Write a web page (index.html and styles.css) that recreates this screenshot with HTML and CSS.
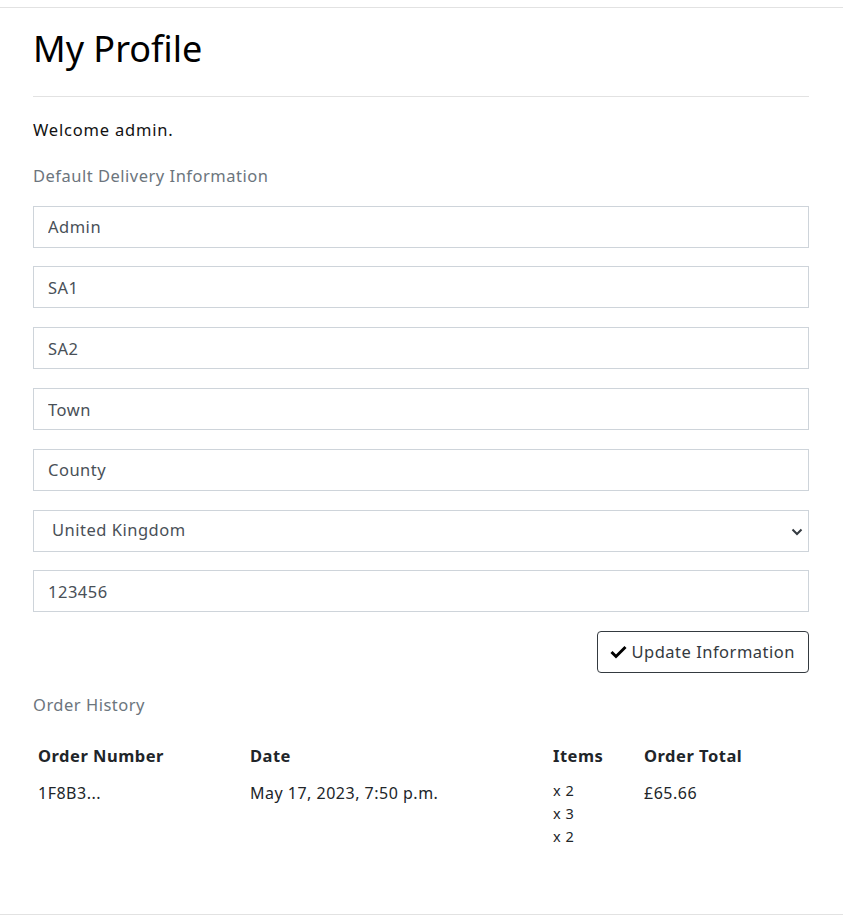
FILE: index.html
```
<!DOCTYPE html>
<html lang="en">
<head>
<meta charset="utf-8">
<title>My Profile</title>
<link rel="stylesheet" href="styles.css">
</head>
<body>
<div class="topbar"></div>
<main class="page">
  <h1 class="title">My Profile</h1>
  <hr class="rule">
  <p class="welcome">Welcome admin.</p>
  <p class="section-label">Default Delivery Information</p>
  <form class="form">
    <input class="field" type="text" value="Admin">
    <input class="field" type="text" value="SA1">
    <input class="field" type="text" value="SA2">
    <input class="field" type="text" value="Town">
    <input class="field" type="text" value="County">
    <div class="select-wrap">
      <select class="field select">
        <option>United Kingdom</option>
      </select>
      <svg class="chev" width="12" height="8" viewBox="0 0 12 8"><path d="M1.5 1.5 L6 6 L10.5 1.5" fill="none" stroke="#343a40" stroke-width="2"/></svg>
    </div>
    <input class="field" type="text" value="123456">
    <div class="actions">
      <button type="button" class="btn">
        <svg class="check" width="17" height="14" viewBox="0 0 17 14"><path d="M1.5 7 L6 11.5 L15.5 2" fill="none" stroke="#000" stroke-width="3"/></svg>
        Update Information
      </button>
    </div>
  </form>
  <p class="section-label orders-label">Order History</p>
  <table class="orders">
    <thead>
      <tr>
        <th class="c-num">Order Number</th>
        <th class="c-date">Date</th>
        <th class="c-items">Items</th>
        <th class="c-total">Order Total</th>
      </tr>
    </thead>
    <tbody>
      <tr>
        <td>1F8B3...</td>
        <td>May 17, 2023, 7:50 p.m.</td>
        <td>
          <ul class="items">
            <li>x 2</li>
            <li>x 3</li>
            <li>x 2</li>
          </ul>
        </td>
        <td>£65.66</td>
      </tr>
    </tbody>
  </table>
</main>
<div class="bottombar"></div>
</body>
</html>
```
FILE: styles.css
```
* { box-sizing: border-box; }
html, body { margin: 0; padding: 0; background: #fff; }
body {
  font-family: "Noto Sans", "Open Sans", sans-serif;
  color: #212529;
  font-size: 16px;
  line-height: 1.5;
  letter-spacing: 0.5px;
}
.topbar { height: 8px; border-bottom: 1px solid #e2e2e2; }
.page { padding: 19px 34px 0 33px; height: 906px; }
.title {
  font-weight: 400;
  font-size: 36px;
  line-height: 1.2;
  margin: 0;
  color: #000;
  letter-spacing: 0;
}
.rule { border: 0; border-top: 1px solid #e2e2e2; margin: 26px 0 0; }
.welcome { margin: 21px 0 0; font-size: 16.5px; color: #111; letter-spacing: 0.8px; }
.section-label { margin: 21px 0 0; color: #6c757d; font-size: 16.5px; }
.form { margin-top: 17px; display: flex; flex-direction: column; gap: 18.8px; }
.field {
  display: block;
  width: 100%;
  height: 42px;
  border: 1px solid #ced4da;
  border-radius: 0;
  padding: 0 14px;
  font: inherit;
  font-size: 16.5px;
  letter-spacing: 0.5px;
  color: #495057;
  background: #fff;
}
.select-wrap { position: relative; }
.select { appearance: none; -webkit-appearance: none; padding-left: 18px; }
.chev { position: absolute; right: 6px; top: 18px; }
.actions { display: flex; justify-content: flex-end; }
.btn {
  display: inline-flex;
  align-items: center;
  gap: 4px;
  height: 42px;
  padding: 0 13px 0 12px;
  border: 1px solid #343a40;
  border-radius: 4px;
  background: #fff;
  font: inherit;
  font-size: 16.5px;
  letter-spacing: 0.5px;
  color: #343a40;
}
.orders-label { margin-top: 20px; }
.orders { width: 100%; border-collapse: collapse; margin-top: 26px; }
.orders th, .orders td { text-align: left; vertical-align: top; padding: 0 5px; }
.orders th { font-weight: 700; font-size: 16.5px; color: #212529; padding-bottom: 12px; }
.orders td { font-size: 16px; color: #212529; }
.c-num { width: 212px; }
.c-date { width: 303px; }
.c-items { width: 91px; }
.items { list-style: none; margin: -2px 0 0; padding: 0; font-size: 14.5px; line-height: 23px; }
.bottombar { border-top: 1px solid #e2e2e2; height: 7px; }
```
